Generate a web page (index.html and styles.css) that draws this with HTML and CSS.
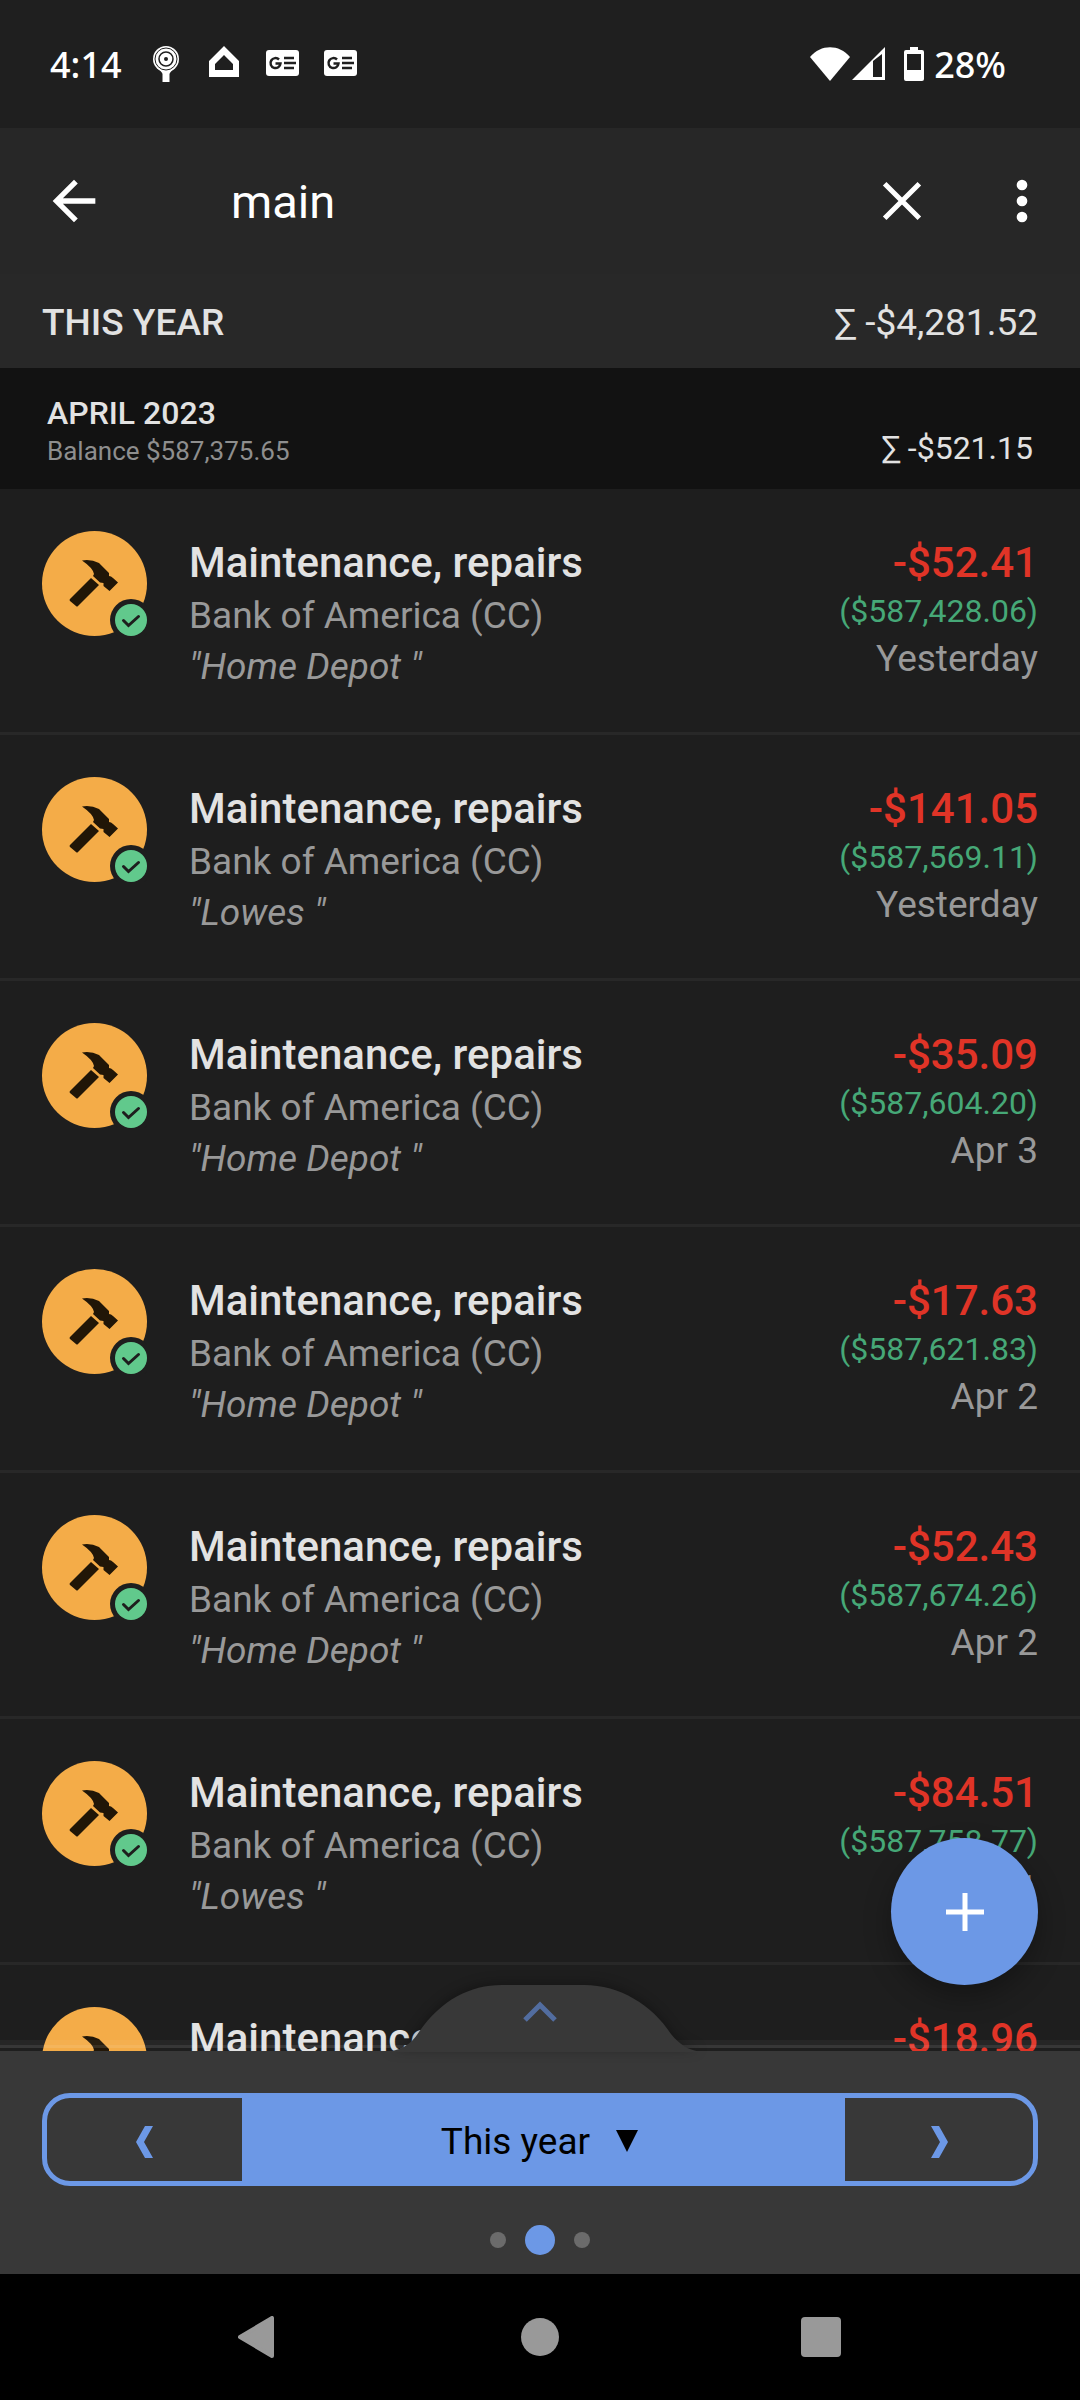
FILE: index.html
```html
<!DOCTYPE html>
<html lang="en">
<head>
  <meta charset="UTF-8" />
  <meta name="viewport" content="width=device-width, initial-scale=1.0" />
  <title>Transactions</title>
  <link rel="stylesheet" href="styles.css">
</head>
<body>
  <div class="app">
    <div class="status-bar">
      <div class="status-left">
        <span class="clock">4:14</span>
        <svg class="status-icon" width="36" height="38" viewBox="0 0 36 38">
          <path d="M14.500 24h7v13h-7z" fill="#fff"/>
          <circle cx="18" cy="14" r="13" fill="#fff"/>
          <path d="M10 23l5 6h6l5-6z" fill="#fff"/>
          <circle cx="18" cy="14" r="11" fill="none" stroke="#1f1f1f" stroke-width="1"/>
          <circle cx="18" cy="14" r="7" fill="none" stroke="#1f1f1f" stroke-width="1.500"/>
          <circle cx="18" cy="14" r="2" fill="#1f1f1f"/>
        </svg>
        <svg class="status-icon" width="36" height="38" viewBox="0 0 36 38">
          <path d="M18 1L33 16v16H3V16zM18 10L9 19v6h18v-6z" fill="#fff" fill-rule="evenodd"/>
        </svg>
        <svg class="status-icon" width="36" height="38" viewBox="0 0 36 38">
          <use href="#news"/>
        </svg>
        <svg class="status-icon" width="36" height="38" viewBox="0 0 36 38">
          <use href="#news"/>
        </svg>
      </div>
      <div class="status-right">
        <svg width="40" height="34" viewBox="0 0 40 34">
          <path d="M20 34L0 10C11-3 29-3 40 10z" fill="#fff"/>
        </svg>
        <svg width="34" height="34" viewBox="0 0 34 34">
          <path d="M0 33L33 0v33zM21 14v16h9V7z" fill="#fff" fill-rule="evenodd"/>
        </svg>
        <svg class="battery" width="20" height="34" viewBox="0 0 20 34">
          <path d="M6 0h8v3h4a2 2 0 0 1 2 2v27a2 2 0 0 1-2 2H2a2 2 0 0 1-2-2V5a2 2 0 0 1 2-2h4zM3 7v16h14V7z" fill="#fff" fill-rule="evenodd"/>
        </svg>
        <span class="percent">28%</span>
      </div>
    </div>

    <div class="toolbar">
      <button class="icon-button" aria-label="Back">
        <svg width="64" height="64" viewBox="0 0 24 24"><path d="M20 11H7.830l5.590-5.590L12 4l-8 8 8 8 1.410-1.410L7.830 13H20z" fill="#fff"/></svg>
      </button>
      <input class="search" type="text" value="main" aria-label="Search">
      <button class="icon-button" aria-label="Clear">
        <svg width="64" height="64" viewBox="0 0 24 24"><path d="M5.500 5.500L18.500 18.500M18.500 5.500L5.500 18.500" stroke="#fff" stroke-width="1.900"/></svg>
      </button>
      <button class="icon-button" aria-label="More options">
        <svg width="64" height="64" viewBox="0 0 24 24"><path d="M12 8a2 2 0 1 0 0-4 2 2 0 0 0 0 4zm0 2a2 2 0 1 0 0 4 2 2 0 0 0 0-4zm0 6a2 2 0 1 0 0 4 2 2 0 0 0 0-4z" fill="#fff"/></svg>
      </button>
    </div>

    <div class="period-summary">
      <span class="period-name">THIS YEAR</span>
      <span>∑ -$4,281.52</span>
    </div>

    <div class="month">
      <div>
        <div class="month-name">APRIL 2023</div>
        <div class="month-balance">Balance $587,375.65</div>
      </div>
      <div class="month-sum">∑ -$521.15</div>
    </div>

    <div class="content">
      <div class="list" id="list"></div>
      <div class="list-edge"></div>
      <button class="fab" aria-label="Add transaction">
        <svg width="38" height="38" viewBox="0 0 38 38"><path d="M19 0v38M0 19h38" stroke="#fff" stroke-width="5"/></svg>
      </button>
    </div>

    <div class="sheet">
      <svg class="sheet-tab" width="320" height="67" viewBox="0 0 320 67">
        <path d="M4 67C20 66 31 60 39 47C61 15 90 0 122 0H204C240 0 272 20 291 49C300 60 308 65 322 67z" fill="#383838"/>
        <path d="M145 35L160 20L175 35" fill="none" stroke="#526da0" stroke-width="5"/>
      </svg>
      <div class="period-picker">
        <button class="step" aria-label="Previous period">
          <svg width="17" height="32" viewBox="0 0 17 32"><path d="M9 0h8L8 16l9 16H9L0 16z" fill="#6c98e6"/></svg>
        </button>
        <button class="current">
          This year
          <svg width="22" height="22" viewBox="0 0 22 22"><path d="M0 0h22L11 22z"/></svg>
        </button>
        <button class="step" aria-label="Next period">
          <svg width="17" height="32" viewBox="0 0 17 32"><path d="M8 0H0l9 16L0 32h8l9-16z" fill="#6c98e6"/></svg>
        </button>
      </div>
      <div class="dots">
        <div class="dot"></div>
        <div class="dot active"></div>
        <div class="dot"></div>
      </div>
    </div>

    <div class="nav-bar">
      <button class="nav-button" aria-label="Back">
        <svg width="42" height="42" viewBox="0 0 42 42"><path d="M2 21L34 2V40z" fill="#999" stroke="#999" stroke-width="4" stroke-linejoin="round"/></svg>
      </button>
      <button class="nav-button" aria-label="Home">
        <svg width="42" height="42" viewBox="0 0 42 42"><circle cx="21" cy="21" r="19" fill="#999"/></svg>
      </button>
      <button class="nav-button" aria-label="Recent apps">
        <svg width="42" height="42" viewBox="0 0 42 42"><rect x="1" y="1" width="40" height="40" rx="4" fill="#999"/></svg>
      </button>
    </div>
  </div>

  <svg class="symbols" width="0" height="0">
    <symbol id="news" viewBox="0 0 36 38">
      <rect x="2" y="5" width="33" height="26" rx="3" fill="#fff"/>
      <path d="M15 14.500a5 5 0 1 0 1.500 4H11.500" fill="none" stroke="#1f1f1f" stroke-width="2.500"/>
      <path d="M20 13h10M20 18h12M20 23h10" stroke="#1f1f1f" stroke-width="2.500"/>
    </symbol>
    <symbol id="hammer" viewBox="0 0 105 105">
      <circle cx="52.500" cy="52.500" r="52.500" fill="#f4ac48"/>
      <path d="M49 47l8 7-21 21q-1 1-2 0l-6-5q-1-1 0-2z" fill="#211607"/>
      <path d="M40 29.500Q49 28 57 32L67 42v3q2 0 4 2l5 4.500-8.500 8.500-6-5v-3l-3.500-.5-7-6.500 1-2Q51 37 40 29.500z" fill="#211607"/>
      <circle cx="89" cy="89" r="21" fill="#1e1e1e"/>
      <circle cx="89" cy="89" r="16" fill="#61c98c"/>
      <path d="M81.500 89.500l5 5 10-9" fill="none" stroke="#1e1e1e" stroke-width="3" stroke-linecap="round"/>
    </symbol>
  </svg>

  <script>
    const transactions = [
      { amount: '-$52.41', account: 'Bank of America (CC)', note: '"Home Depot "', balance: '($587,428.06)', date: 'Yesterday' },
      { amount: '-$141.05', account: 'Bank of America (CC)', note: '"Lowes "', balance: '($587,569.11)', date: 'Yesterday' },
      { amount: '-$35.09', account: 'Bank of America (CC)', note: '"Home Depot "', balance: '($587,604.20)', date: 'Apr 3' },
      { amount: '-$17.63', account: 'Bank of America (CC)', note: '"Home Depot "', balance: '($587,621.83)', date: 'Apr 2' },
      { amount: '-$52.43', account: 'Bank of America (CC)', note: '"Home Depot "', balance: '($587,674.26)', date: 'Apr 2' },
      { amount: '-$84.51', account: 'Bank of America (CC)', note: '"Lowes "', balance: '($587,758.77)', date: 'Apr 1' },
      { amount: '-$18.96', account: '', note: '', balance: '', date: '' }
    ];

    const list = document.getElementById('list');

    transactions.forEach((item) => {
      const row = document.createElement('div');
      row.className = 'row';
      row.innerHTML = `
        <svg class="avatar" width="105" height="105"><use href="#hammer"/></svg>
        <div class="details">
          <div class="category">Maintenance, repairs</div>
          <div class="account">${item.account}</div>
          <div class="note">${item.note}</div>
        </div>
        <div class="values">
          <div class="amount">${item.amount}</div>
          <div class="balance">${item.balance}</div>
          <div class="date">${item.date}</div>
        </div>`;
      list.appendChild(row);
    });
  </script>
</body>
</html>
```
FILE: styles.css
```css
* {
  box-sizing: border-box;
}
body {
  margin: 0;
  background-color: #1e1e1e;
  font-family: Roboto, sans-serif;
  color: #e2e2e2;
}
button {
  padding: 0;
  border: none;
  background: none;
  font-family: inherit;
  display: flex;
  align-items: center;
  justify-content: center;
}
svg {
  display: block;
  flex: none;
}
.symbols {
  position: absolute;
}
.app {
  display: flex;
  flex-direction: column;
  height: 100vh;
  overflow: hidden;
}
.status-bar {
  display: flex;
  justify-content: space-between;
  align-items: center;
  height: 128px;
  flex: none;
  padding: 0 74px 0 50px;
  background-color: #1f1f1f;
  color: #fff;
  font-family: "Noto Sans", sans-serif;
  font-size: 36px;
  font-weight: 500;
}
.status-left {
  display: flex;
  align-items: center;
  gap: 22px;
}
.clock {
  margin-right: 4px;
}
.status-right {
  display: flex;
  align-items: center;
  gap: 2px;
}
.battery {
  margin: 0 8px 0 16px;
}
.toolbar {
  display: flex;
  align-items: center;
  height: 146px;
  flex: none;
  padding: 0 26px 0 42px;
  background-color: #272727;
}
.icon-button + .icon-button {
  margin-left: 56px;
}
.search {
  flex: 1;
  min-width: 0;
  margin-left: 125px;
  padding: 0;
  border: none;
  outline: none;
  background: none;
  color: #fff;
  font-family: inherit;
  font-size: 47px;
}
.period-summary {
  display: flex;
  justify-content: space-between;
  align-items: center;
  height: 94px;
  flex: none;
  padding: 2px 42px 0;
  background-color: #282828;
  font-size: 37px;
}
.period-name {
  font-weight: 500;
}
.month {
  display: flex;
  justify-content: space-between;
  align-items: flex-end;
  height: 121px;
  flex: none;
  padding: 0 47px 21px;
  background-color: #121212;
  font-size: 32px;
}
.month-name {
  font-weight: 500;
  line-height: 42px;
}
.month-balance {
  color: #8e8e8e;
  font-size: 26px;
  line-height: 34px;
}
.month-sum {
  line-height: 40px;
}
.content {
  position: relative;
  flex: 1;
  min-height: 0;
}
.list {
  height: 100%;
  overflow: hidden;
}
.row {
  display: flex;
  align-items: flex-start;
  height: 246px;
  padding: 42px 42px 0;
  border-bottom: 3px solid #282828;
}
.details {
  flex: 1;
  margin-left: 42px;
  padding-top: 5px;
}
.category, .amount {
  font-size: 42px;
  font-weight: 500;
  line-height: 54px;
}
.account, .note, .date {
  color: #999;
  font-size: 37px;
  line-height: 52px;
}
.note {
  font-style: italic;
  line-height: 50px;
}
.values {
  padding-top: 5px;
  text-align: right;
}
.amount {
  color: #e03427;
}
.balance {
  color: #46a877;
  font-size: 32px;
  line-height: 43px;
}
/* faint stripes above the bottom sheet, rows show through */
.list-edge {
  position: absolute;
  left: 0;
  right: 0;
  bottom: 3px;
  height: 8px;
  background-color: rgba(255, 255, 255, 0.04);
  border-bottom: 3px solid rgba(255, 255, 255, 0.08);
}
.fab {
  position: absolute;
  right: 42px;
  bottom: 66px;
  width: 147px;
  height: 147px;
  border-radius: 50%;
  background-color: #6c98e6;
  box-shadow: 0 12px 28px rgba(0, 0, 0, 0.3);
}
.sheet {
  position: relative;
  flex: none;
  height: 223px;
  padding: 42px 42px 0;
  background-color: #383838;
}
.sheet-tab {
  position: absolute;
  left: 50%;
  bottom: 100%;
  margin-left: -160px;
  margin-bottom: -1px;
  filter: drop-shadow(0 -2px 6px rgba(0, 0, 0, 0.3));
}
.period-picker {
  display: flex;
  height: 93px;
  border: 5px solid #6c98e6;
  border-radius: 28px;
  overflow: hidden;
}
.step {
  width: 195px;
  padding-top: 4px;
}
.step:last-child {
  width: 188px;
}
.current {
  flex: 1;
  gap: 26px;
  padding: 3px 8px 0 0;
  background-color: #6c98e6;
  color: #000;
  font-size: 37px;
}
.dots {
  display: flex;
  justify-content: center;
  align-items: center;
  gap: 19px;
  margin-top: 39px;
}
.dot {
  width: 16px;
  height: 16px;
  border-radius: 50%;
  background-color: #6b6b6b;
}
.dot.active {
  width: 30px;
  height: 30px;
  background-color: #6c98e6;
}
.nav-bar {
  display: flex;
  justify-content: space-around;
  align-items: center;
  flex: none;
  height: 126px;
  padding: 0 118px;
  background-color: #000;
}
```
